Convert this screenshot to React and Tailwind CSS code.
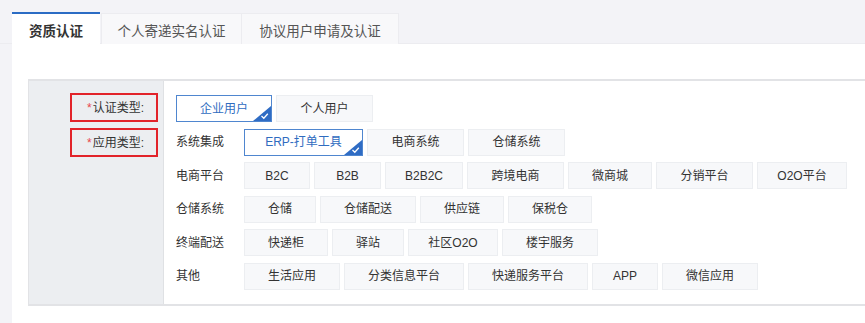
const font = { fontFamily: '"Liberation Sans", "Noto Sans CJK SC", sans-serif' };

const groups = [
  {
    label: "系统集成",
    items: [
      ["ERP-打单工具", "w-[119px]", true],
      ["电商系统", "w-[97px]"],
      ["仓储系统", "w-[97px]"],
    ],
  },
  {
    label: "电商平台",
    items: [
      ["B2C", "w-[66px]"],
      ["B2B", "w-[67px]"],
      ["B2B2C", "w-[78px]"],
      ["跨境电商", "w-[97px]"],
      ["微商城", "w-[84px]"],
      ["分销平台", "w-[97px]"],
      ["O2O平台", "w-[90px]"],
    ],
  },
  {
    label: "仓储系统",
    items: [
      ["仓储", "w-[72px]"],
      ["仓储配送", "w-[96px]"],
      ["供应链", "w-[84px]"],
      ["保税仓", "w-[84px]"],
    ],
  },
  {
    label: "终端配送",
    items: [
      ["快递柜", "w-[84px]"],
      ["驿站", "w-[72px]"],
      ["社区O2O", "w-[90px]"],
      ["楼宇服务", "w-[96px]"],
    ],
  },
  {
    label: "其他",
    items: [
      ["生活应用", "w-[96px]"],
      ["分类信息平台", "w-[120px]"],
      ["快递服务平台", "w-[120px]"],
      ["APP", "w-[66px]"],
      ["微信应用", "w-[96px]"],
    ],
  },
];

/* selectable option chip, selected one gets blue border + corner check */
function Chip({ text, width, active }) {
  if (active) {
    return (
      <div
        className={`${width} relative h-[27px] flex items-center justify-center border border-[#4f86cf] bg-white text-[12px] text-[#2f6cbf]`}
      >
        {text}
        <svg
          className="absolute right-0 bottom-0"
          width="18"
          height="15"
          viewBox="0 0 18 15"
        >
          <path d="M18 0 L18 15 L0 15 Z" fill="#2f6cc4" />
          <path
            d="M8.5 10 L10.8 12.2 L14.8 7.8"
            fill="none"
            stroke="#fff"
            strokeWidth="1.3"
          />
        </svg>
      </div>
    );
  }
  return (
    <div
      className={`${width} h-[27px] flex items-center justify-center border border-[#eceef1] bg-[#f7f8fa] text-[12px] text-[#333]`}
    >
      {text}
    </div>
  );
}

function LabelBox({ text }) {
  return (
    <div className="w-[88px] h-[29px] border-2 border-[#e2232a] flex items-center justify-end pr-[12px] text-[12px] text-[#333]">
      <span className="text-[#e8474c] mr-[1px]">*</span>
      {text}
    </div>
  );
}

export default function App() {
  return (
    <div className="w-[865px] h-[323px] overflow-hidden bg-[#f3f3f7]" style={font}>
      {/* Tabs */}
      <div className="flex pl-[12px] pt-[12px] h-[44px] border-b border-[#ececf0]">
        <div className="w-[88px] h-[33px] bg-white border-t-2 border-[#2b6cc4] flex items-center justify-center pt-[6px] text-[13.5px] font-bold text-[#333]">
          资质认证
        </div>
        <div className="w-[141px] h-[31px] mt-[1px] ml-[1px] bg-[#f8f8fa] border border-[#ececf0] border-b-0 flex items-center justify-center pt-[6px] text-[13.5px] text-[#555]">
          个人寄递实名认证
        </div>
        <div className="w-[157px] h-[31px] mt-[1px] bg-[#f8f8fa] border border-l-0 border-[#ececf0] border-b-0 flex items-center justify-center pt-[6px] text-[13.5px] text-[#555]">
          协议用户申请及认证
        </div>
      </div>

      {/* Card */}
      <div className="ml-[12px] h-[279px] bg-white pl-[16px] pt-[35px]">
        <div className="flex border-t-2 border-b-2 border-l border-[#e2e3e6] h-[227px]">
          {/* label column */}
          <div className="w-[135px] bg-[#eceef1] border-r border-[#dfe1e4] flex flex-col items-end pr-[5px] pt-[12px] gap-[6px]">
            <LabelBox text="认证类型:" />
            <LabelBox text="应用类型:" />
          </div>

          {/* options */}
          <div className="flex-1 pl-[12px] pt-[14px] flex flex-col gap-[6.6px]">
            <div className="flex gap-[4px]">
              <Chip text="企业用户" width="w-[96px]" active />
              <Chip text="个人用户" width="w-[97px]" />
            </div>
            {groups.map((g) => (
              <div key={g.label} className="flex items-center">
                <div className="w-[68px] text-[12px] text-[#333]">{g.label}</div>
                <div className="flex gap-[4px]">
                  {g.items.map(([t, w, a]) => (
                    <Chip key={t} text={t} width={w} active={a} />
                  ))}
                </div>
              </div>
            ))}
          </div>
        </div>
      </div>
    </div>
  );
}
